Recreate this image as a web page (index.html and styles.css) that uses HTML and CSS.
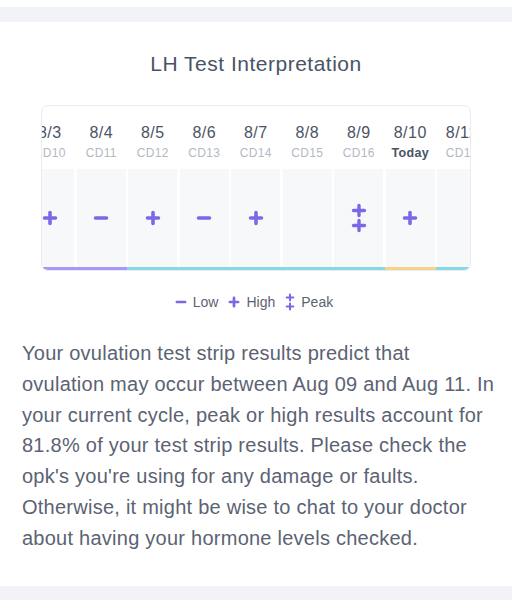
FILE: index.html
```html
<!DOCTYPE html>
<html lang="en">
<head>
  <meta charset="UTF-8">
  <title>LH Test Interpretation</title>
  <meta name="viewport" content="width=device-width, initial-scale=1.0">
  <link rel="stylesheet" href="styles.css">
</head>
<body>
  <div class="band"></div>
  <div class="panel">
    <h2>LH Test Interpretation</h2>
    <div class="chart">
      <div class="track">
        <div class="col"><div class="head"><div class="date">8/3</div><div class="cd">CD10</div></div><div class="cell"><svg class="ico"><use href="#plus"/></svg></div><div class="bar purple"></div></div>
        <div class="col"><div class="head"><div class="date">8/4</div><div class="cd">CD11</div></div><div class="cell"><svg class="ico"><use href="#minus"/></svg></div><div class="bar purple"></div></div>
        <div class="col"><div class="head"><div class="date">8/5</div><div class="cd">CD12</div></div><div class="cell"><svg class="ico"><use href="#plus"/></svg></div><div class="bar cyan"></div></div>
        <div class="col"><div class="head"><div class="date">8/6</div><div class="cd">CD13</div></div><div class="cell"><svg class="ico"><use href="#minus"/></svg></div><div class="bar cyan"></div></div>
        <div class="col"><div class="head"><div class="date">8/7</div><div class="cd">CD14</div></div><div class="cell"><svg class="ico"><use href="#plus"/></svg></div><div class="bar cyan"></div></div>
        <div class="col"><div class="head"><div class="date">8/8</div><div class="cd">CD15</div></div><div class="cell"></div><div class="bar cyan"></div></div>
        <div class="col"><div class="head"><div class="date">8/9</div><div class="cd">CD16</div></div><div class="cell"><svg class="ico peak"><use href="#peak"/></svg></div><div class="bar cyan"></div></div>
        <div class="col"><div class="head"><div class="date">8/10</div><div class="cd today">Today</div></div><div class="cell"><svg class="ico"><use href="#plus"/></svg></div><div class="bar yellow"></div></div>
        <div class="col"><div class="head"><div class="date">8/11</div><div class="cd">CD18</div></div><div class="cell"></div><div class="bar cyan"></div></div>
      </div>
    </div>
    <div class="legend">
      <svg class="lg"><use href="#minus"/></svg><span>Low</span>
      <svg class="lg"><use href="#plus"/></svg><span>High</span>
      <svg class="lg tall"><use href="#peak"/></svg><span>Peak</span>
    </div>
    <p class="note">Your ovulation test strip results predict that ovulation may occur between Aug 09 and Aug 11. In your current cycle, peak or high results account for 81.8% of your test strip results. Please check the opk's you're using for any damage or faults. Otherwise, it might be wise to chat to your doctor about having your hormone levels checked.</p>
  </div>
  <div class="band bottom"></div>

  <svg width="0" height="0" style="position:absolute">
    <symbol id="plus" viewBox="0 0 16 16"><path d="M2.5 8h11M8 2.5v11" stroke="currentColor" stroke-width="3.6" stroke-linecap="round" fill="none"/></symbol>
    <symbol id="minus" viewBox="0 0 16 16"><path d="M2.5 8h11" stroke="currentColor" stroke-width="3.6" stroke-linecap="round" fill="none"/></symbol>
    <symbol id="peak" viewBox="0 0 16 30"><path d="M2.5 7.5h11M8 2.5v10M2.5 22.5h11M8 17.5v10" stroke="currentColor" stroke-width="3.4" stroke-linecap="round" fill="none"/></symbol>
  </svg>
</body>
</html>
```

FILE: styles.css
```css
body { margin:0; background:#fff; font-family:'Liberation Sans',Arial,sans-serif; color:#4b5366; }
.band { height:15px; margin-top:7px; background:#f2f3f7; }
.band.bottom { margin-top:32px; height:14px; }
.panel { padding:0 22px; }
h2 { margin:28px 0 0; text-align:center; font-weight:normal; font-size:21px; letter-spacing:0.5px; line-height:28px; color:#4a5366; }
.chart { margin:27px 19px 0; height:164px; border:1px solid #e9ebf2; border-radius:7px; overflow:hidden; }
.track { display:flex; margin-left:-18px; }
.col { flex:0 0 51.5px; display:flex; flex-direction:column; align-items:stretch; }
.head { height:63px; text-align:center; white-space:nowrap; }
.date { margin-top:17px; font-size:16px; line-height:20px; letter-spacing:0.5px; color:#4b5366; }
.cd { font-size:12px; line-height:20px; letter-spacing:0.3px; color:#b3b8c3; }
.cd.today { color:#4b5366; font-weight:bold; font-size:12.5px; }
.cell { height:98px; margin:0 1.25px; background:#f7f8fa; display:flex; align-items:center; justify-content:center; color:#7a68e6; }
.ico { width:16px; height:16px; }
.ico.peak { width:16px; height:30px; }
.bar { height:3px; }
.purple { background:#a996f5; }
.cyan { background:#86d8e6; }
.yellow { background:#f7d38a; }
.legend { margin-top:21px; display:flex; justify-content:center; align-items:center; gap:6px; font-size:14px; line-height:20px; color:#5b6373; }
.legend span { margin-right:4px; }
.lg { width:12px; height:12px; color:#7a68e6; }
.lg.tall { width:10px; height:18px; }
.note { margin:26px -6px 0 0; font-size:20px; letter-spacing:0.25px; line-height:30.8px; color:#5b6373; }
```
